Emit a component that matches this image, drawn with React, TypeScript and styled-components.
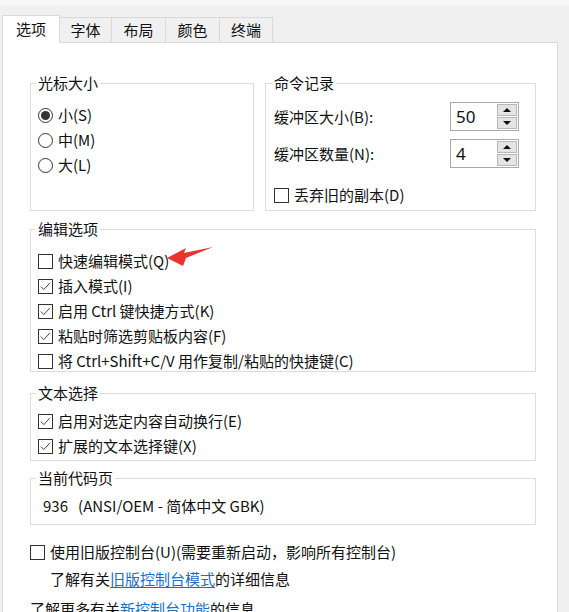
import React from "react";
import styled, { createGlobalStyle } from "styled-components";

const Global = createGlobalStyle`
  html, body { margin: 0; padding: 0; background: #f0f0f0; }
  body {
    font-family: "Noto Sans CJK SC", "Noto Sans", sans-serif;
    font-size: 15px;
    color: #111;
  }
`;

const Window = styled.div`
  width: 569px;
  height: 612px;
  overflow: hidden;
  background: #f0f0f0;
  border-top: 5px solid #f7f7f7;
  box-sizing: border-box;
  display: flex;
  flex-direction: column;
`;

const TabBar = styled.div`
  display: flex;
  align-items: flex-end;
  padding: 10px 0 0 2px;
`;

const Tab = styled.div<{ $active?: boolean; $w: number }>`
  box-sizing: border-box;
  width: ${(p) => p.$w}px;
  height: ${(p) => (p.$active ? 28 : 25)}px;
  margin-bottom: ${(p) => (p.$active ? -1 : 0)}px;
  margin-left: ${(p) => (p.$active ? 0 : -1)}px;
  border: 1px solid #d9d9d9;
  border-bottom: none;
  background: ${(p) => (p.$active ? "#fff" : "#f0f0f0")};
  position: relative;
  z-index: ${(p) => (p.$active ? 2 : 1)};
  display: flex;
  align-items: center;
  justify-content: center;
  padding-bottom: ${(p) => (p.$active ? 2 : 0)}px;
  font-size: 15px;
  line-height: 20px;
  &:first-child { margin-left: 0; }
`;

const Panel = styled.div`
  margin-left: 2px;
  width: 556px;
  flex: 1;
  box-sizing: border-box;
  background: #fff;
  border: 1px solid #d9d9d9;
  padding: 30px 21px 0 27px;
  display: flex;
  flex-direction: column;
`;

const TopRow = styled.div`
  display: grid;
  grid-template-columns: 224px 271px;
  column-gap: 11px;
  align-items: stretch;
`;

const Group = styled.fieldset<{ $pt: number; $pb: number; $pl?: number; $pr?: number; $mt?: number }>`
  margin: ${(p) => p.$mt ?? 0}px 0 0 0;
  min-width: 0;
  border: 1px solid #dcdcdc;
  padding: ${(p) => p.$pt}px ${(p) => p.$pr ?? 7}px ${(p) => p.$pb}px ${(p) => p.$pl ?? 7}px;
  display: flex;
  flex-direction: column;
  gap: 5px;
`;

const Legend = styled.legend`
  padding: 0 2px;
  margin-left: -2px;
  line-height: 20px;
  font-size: 15px;
  color: #111;
`;

const OptionRow = styled.div<{ $h?: number }>`
  display: flex;
  align-items: center;
  height: ${(p) => p.$h ?? 20}px;
  gap: 5px;
  line-height: 20px;
  white-space: nowrap;
  position: relative;
`;

const RadioCircle = styled.span<{ $on?: boolean }>`
  box-sizing: border-box;
  width: 15px;
  height: 15px;
  border-radius: 50%;
  border: 1px solid #333;
  background: #fff;
  display: flex;
  align-items: center;
  justify-content: center;
  flex: none;
  &::after {
    content: "";
    display: ${(p) => (p.$on ? "block" : "none")};
    width: 9px;
    height: 9px;
    border-radius: 50%;
    background: #333;
  }
`;

const Box = styled.span`
  box-sizing: border-box;
  width: 15px;
  height: 15px;
  border: 1px solid #333;
  background: #fff;
  flex: none;
  display: flex;
  align-items: center;
  justify-content: center;
`;

const SpinRow = styled.div<{ $mt?: number }>`
  display: flex;
  align-items: center;
  justify-content: space-between;
  height: 29px;
  margin-top: ${(p) => p.$mt ?? 0}px;
  white-space: nowrap;
`;

const Spin = styled.div`
  box-sizing: border-box;
  width: 69px;
  height: 29px;
  border: 1px solid #a9a9a9;
  background: #fff;
  display: flex;
`;

const SpinValue = styled.span`
  flex: 1;
  padding-left: 5px;
  font-family: "Noto Sans", "Noto Sans CJK SC", sans-serif;
  font-size: 17px;
  line-height: 27px;
`;

const SpinButtons = styled.div`
  width: 20px;
  margin: 1px;
  display: flex;
  flex-direction: column;
  gap: 1px;
`;

const SpinButton = styled.span<{ $down?: boolean }>`
  flex: 1;
  box-sizing: border-box;
  border: 1px solid #b8b8b8;
  background: #e4e4e4;
  display: flex;
  align-items: center;
  justify-content: center;
  &::after {
    content: "";
    width: 0;
    height: 0;
    border-left: 4px solid transparent;
    border-right: 4px solid transparent;
    ${(p) => (p.$down ? "border-top: 4px solid #111;" : "border-bottom: 4px solid #111;")}
  }
`;

const CheckRowSpaced = styled(OptionRow)<{ $mt: number }>`
  margin-top: ${(p) => p.$mt}px;
`;

const CodeText = styled.div`
  height: 20px;
  line-height: 20px;
  padding-left: 5px;
  white-space: pre;
`;

const Bottom = styled.div`
  display: flex;
  flex-direction: column;
  margin-top: 17px;
`;

const InfoLine = styled.div<{ $pl: number; $mt: number }>`
  padding-left: ${(p) => p.$pl}px;
  margin-top: ${(p) => p.$mt}px;
  height: 20px;
  line-height: 20px;
  white-space: nowrap;
`;

const Link = styled.a`
  color: #1a6fc4;
  text-decoration: underline;
  text-underline-offset: 2px;
`;

const Arrow = styled.svg`
  position: absolute;
  left: 127px;
  top: -6px;
  width: 50px;
  height: 24px;
  overflow: visible;
`;

const Check = ({ on }: { on?: boolean }) => (
  <Box>
    {on && (
      <svg width="13" height="13" viewBox="0 0 13 13">
        <polyline points="1.8,6.5 4.8,9.6 11,2.8" fill="none" stroke="#444" strokeWidth="1" />
      </svg>
    )}
  </Box>
);

const Radio = ({ on, label }: { on?: boolean; label: string }) => (
  <OptionRow>
    <RadioCircle $on={on} />
    <span>{label}</span>
  </OptionRow>
);

const CheckItem = ({ on, label, children }: { on?: boolean; label: string; children?: React.ReactNode }) => (
  <OptionRow>
    <Check on={on} />
    <span>{label}</span>
    {children}
  </OptionRow>
);

const SpinBox = ({ value }: { value: string }) => (
  <Spin>
    <SpinValue>{value}</SpinValue>
    <SpinButtons>
      <SpinButton />
      <SpinButton $down />
    </SpinButtons>
  </Spin>
);

export default function App() {
  return (
    <>
      <Global />
      <Window>
        <TabBar>
          <Tab $active $w={58}>选项</Tab>
          <Tab $w={53}>字体</Tab>
          <Tab $w={55}>布局</Tab>
          <Tab $w={55}>颜色</Tab>
          <Tab $w={54}>终端</Tab>
        </TabBar>
        <Panel>
          <TopRow>
            <Group $pt={12} $pb={5}>
              <Legend>光标大小</Legend>
              <Radio on label="小(S)" />
              <Radio label="中(M)" />
              <Radio label="大(L)" />
            </Group>
            <Group $pt={9} $pb={5} $pl={8} $pr={16}>
              <Legend>命令记录</Legend>
              <SpinRow>
                <span>缓冲区大小(B):</span>
                <SpinBox value="50" />
              </SpinRow>
              <SpinRow $mt={3}>
                <span>缓冲区数量(N):</span>
                <SpinBox value="4" />
              </SpinRow>
              <CheckRowSpaced $mt={12}>
                <Check />
                <span>丢弃旧的副本(D)</span>
              </CheckRowSpaced>
            </Group>
          </TopRow>

          <Group $pt={12} $pb={0} $mt={8}>
            <Legend>编辑选项</Legend>
            <CheckItem label="快速编辑模式(Q)">
              <Arrow viewBox="0 0 50 24">
                <polygon points="2,13 21,3 19,8 48,2 21,13 18,21" fill="#e8342f" />
              </Arrow>
            </CheckItem>
            <CheckItem on label="插入模式(I)" />
            <CheckItem on label="启用 Ctrl 键快捷方式(K)" />
            <CheckItem on label="粘贴时筛选剪贴板内容(F)" />
            <CheckItem label="将 Ctrl+Shift+C/V 用作复制/粘贴的快捷键(C)" />
          </Group>

          <Group $pt={8} $pb={4} $mt={11}>
            <Legend>文本选择</Legend>
            <CheckItem on label="启用对选定内容自动换行(E)" />
            <CheckItem on label="扩展的文本选择键(X)" />
          </Group>

          <Group $pt={8} $pb={8} $mt={7}>
            <Legend>当前代码页</Legend>
            <CodeText>{"936   (ANSI/OEM - 简体中文 GBK)"}</CodeText>
          </Group>

          <Bottom>
            <OptionRow>
              <Check />
              <span>使用旧版控制台(U)(需要重新启动，影响所有控制台)</span>
            </OptionRow>
            <InfoLine $pl={20} $mt={7}>
              了解有关<Link>旧版控制台模式</Link>的详细信息
            </InfoLine>
            <InfoLine $pl={0} $mt={10}>
              了解更多有关<Link>新控制台功能</Link>的信息
            </InfoLine>
          </Bottom>
        </Panel>
      </Window>
    </>
  );
}
